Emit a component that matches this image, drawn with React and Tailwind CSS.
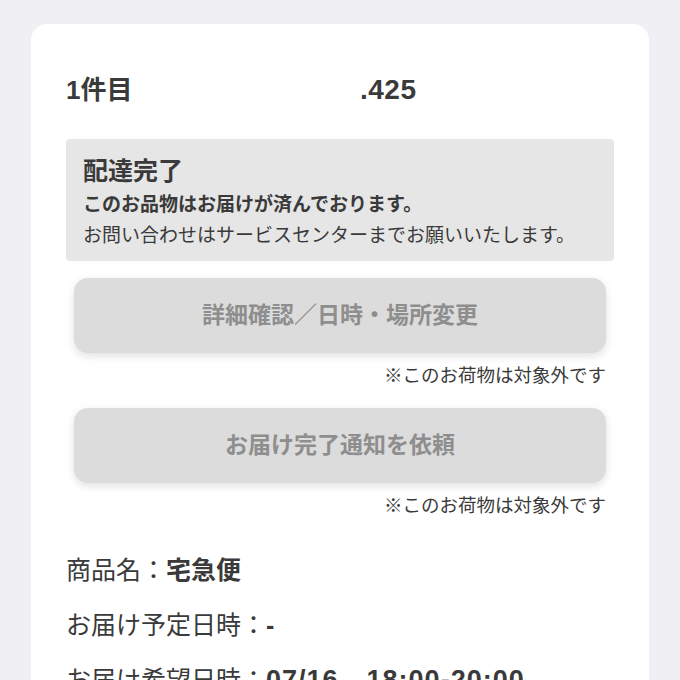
const font = { fontFamily: '"Liberation Sans", "Noto Sans CJK JP", sans-serif' };

const Note = ({ children }) => (
  <p className="mt-[11px] pr-[8px] text-right text-[18.5px] leading-[24px] text-[#3a3a3a]">{children}</p>
);

const DisabledButton = ({ label }) => (
  <button
    type="button"
    disabled
    className="mx-[8px] flex h-[75px] w-[calc(100%-16px)] items-center justify-center rounded-[14px] bg-[#dcdcdc] text-[23px] font-bold text-[#8e8e8e] shadow-[0_3px_8px_rgba(0,0,0,0.12)]"
  >
    {label}
  </button>
);

export default function App() {
  return (
    <div className="h-[680px] overflow-hidden bg-[#efeff4] px-[31px] pt-[24px]" style={font}>
      <div className="rounded-t-[16px] bg-white px-[35px] pb-[40px] pt-[49px]">
        {/* header */}
        <div className="flex items-center font-bold leading-[34px] text-[#3a3a3a]">
          <span className="w-[294px] text-[26px]">1件目</span>
          <span className="text-[28px] tracking-[0.5px]">.425</span>
        </div>

        {/* status */}
        <div className="mt-[32px] rounded-[4px] bg-[#e6e6e6] px-[17px] pb-[11px] pt-[17px] text-[#3a3a3a]">
          <p className="text-[25px] font-bold leading-[30px]">配達完了</p>
          <p className="mt-[5px] text-[19px] font-bold leading-[28px]">このお品物はお届けが済んでおります。</p>
          <p className="mt-[3px] text-[19px] leading-[28px]">お問い合わせはサービスセンターまでお願いいたします。</p>
        </div>

        <div className="mt-[17px]">
          <DisabledButton label="詳細確認／日時・場所変更" />
          <Note>※このお荷物は対象外です</Note>
        </div>

        <div className="mt-[20px]">
          <DisabledButton label="お届け完了通知を依頼" />
          <Note>※このお荷物は対象外です</Note>
        </div>

        {/* details */}
        <div className="mt-[36px] flex flex-col gap-[23px] text-[25px] leading-[32px] text-[#3a3a3a]">
          <p>
            商品名：<span className="font-bold">宅急便</span>
          </p>
          <p>
            お届け予定日時：<span className="font-bold">-</span>
          </p>
          <p>
            お届け希望日時：<span className="text-[27px] font-bold tracking-[1px]">07/16　18:00-20:00</span>
          </p>
        </div>
      </div>
    </div>
  );
}
